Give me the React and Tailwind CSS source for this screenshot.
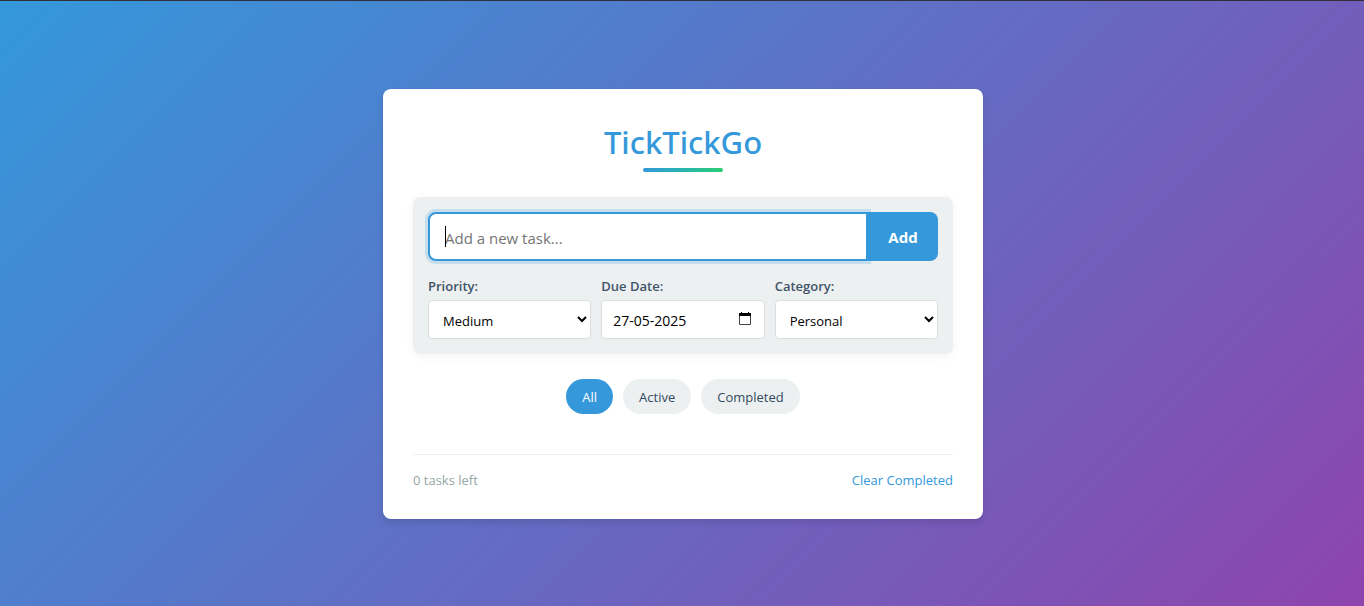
import { useState } from "react";

const FILTERS = ["All", "Active", "Completed"];

const labelClass = "text-[13px] leading-5 font-semibold text-[#3f5468]";
const boxClass =
  "h-[39px] w-full rounded border border-[#dddddd] bg-white pt-0.5 text-black outline-none";

function CalendarIcon() {
  return (
    <svg width="12" height="13" viewBox="0 0 12 13" aria-hidden="true">
      <path fill="#000" d="M2 0h1v1h6V0h1v1h2v3H0V1h2z" />
      <path fill="none" stroke="#444" d="M.5 4v8.5h11V4" />
    </svg>
  );
}

function SelectField({ id, label, options, initial }) {
  return (
    <div className="flex min-w-0 flex-1 flex-col gap-1">
      <label htmlFor={id} className={labelClass}>
        {label}
      </label>
      <select id={id} defaultValue={initial} className={`${boxClass} px-2.5 text-[13px]`}>
        {options.map((option) => (
          <option key={option}>{option}</option>
        ))}
      </select>
    </div>
  );
}

export default function App() {
  const [filter, setFilter] = useState("All");
  const [task, setTask] = useState("");

  return (
    <div className="flex min-h-screen items-center justify-center border-t border-[#2f3038] bg-linear-[135deg,#3498db,#8e44ad] pt-[21px] pr-5 pb-5 pl-[22px] font-['Open_Sans','Noto_Sans',sans-serif]">
      <main className="w-full max-w-[600px] rounded-lg bg-white p-[30px] shadow-[0_4px_6px_rgba(0,0,0,0.1)]">
        <header className="flex flex-col items-center gap-0.5 pb-[25px]">
          <h1 className="font-['Noto_Sans','Open_Sans',sans-serif] text-[31px] leading-[47px] font-medium text-[#3498db]">
            TickTickGo
          </h1>
          <div className="h-1 w-20 rounded-sm bg-linear-to-r from-[#3498db] to-[#2ecc71]" />
        </header>

        <form
          onSubmit={(event) => event.preventDefault()}
          className="rounded-lg bg-[#ecf0f1] p-[15px] shadow-[0_2px_10px_rgba(0,0,0,0.05)]"
        >
          <div className="flex h-[49px]">
            <div className="relative min-w-0 flex-1">
              <input
                type="text"
                autoFocus
                aria-label="New task"
                placeholder="Add a new task..."
                value={task}
                onChange={(event) => setTask(event.target.value)}
                className="h-full w-full rounded-l-lg border-2 border-[#3498db] bg-white px-[15px] pt-0.5 text-[15px] text-black caret-transparent shadow-[0_0_0_3px_rgba(52,152,219,0.2)] outline-none placeholder:text-[#757575]"
              />
              {task === "" && (
                <span className="pointer-events-none absolute top-3.5 left-[17px] h-[21px] w-px bg-black" />
              )}
            </div>
            <button
              type="submit"
              className="min-w-[70px] rounded-r-lg bg-[#3498db] px-5 pt-0.5 text-[15px] font-bold text-white"
            >
              Add
            </button>
          </div>

          <div className="flex gap-2.5 pt-[15px]">
            <SelectField
              id="priority"
              label="Priority:"
              options={["Low", "Medium", "High"]}
              initial="Medium"
            />
            <div className="flex min-w-0 flex-1 flex-col gap-1">
              <label htmlFor="due-date" className={labelClass}>
                Due Date:
              </label>
              <div className="relative">
                <input
                  id="due-date"
                  type="text"
                  defaultValue="27-05-2025"
                  className={`${boxClass} px-[11px] text-sm`}
                />
                <button
                  type="button"
                  aria-label="Open calendar"
                  className="absolute top-3 right-3.5"
                >
                  <CalendarIcon />
                </button>
              </div>
            </div>
            <SelectField
              id="category"
              label="Category:"
              options={["Personal", "Work", "Shopping"]}
              initial="Personal"
            />
          </div>
        </form>

        <div className="flex justify-center gap-2.5 pt-[25px] pb-10">
          {FILTERS.map((name) => (
            <button
              key={name}
              type="button"
              onClick={() => setFilter(name)}
              className={`h-[35px] rounded-full px-4 pt-0.5 text-[13px] ${
                filter === name ? "bg-[#3498db] text-white" : "bg-[#ecf0f1] text-[#34495e]"
              }`}
            >
              {name}
            </button>
          ))}
        </div>

        <footer className="flex justify-between border-t border-[#ecf0f1] pt-4 text-[13px] leading-[18px] text-[#95a5a6]">
          <span>0 tasks left</span>
          <button type="button" className="text-[#3498db]">
            Clear Completed
          </button>
        </footer>
      </main>
    </div>
  );
}
